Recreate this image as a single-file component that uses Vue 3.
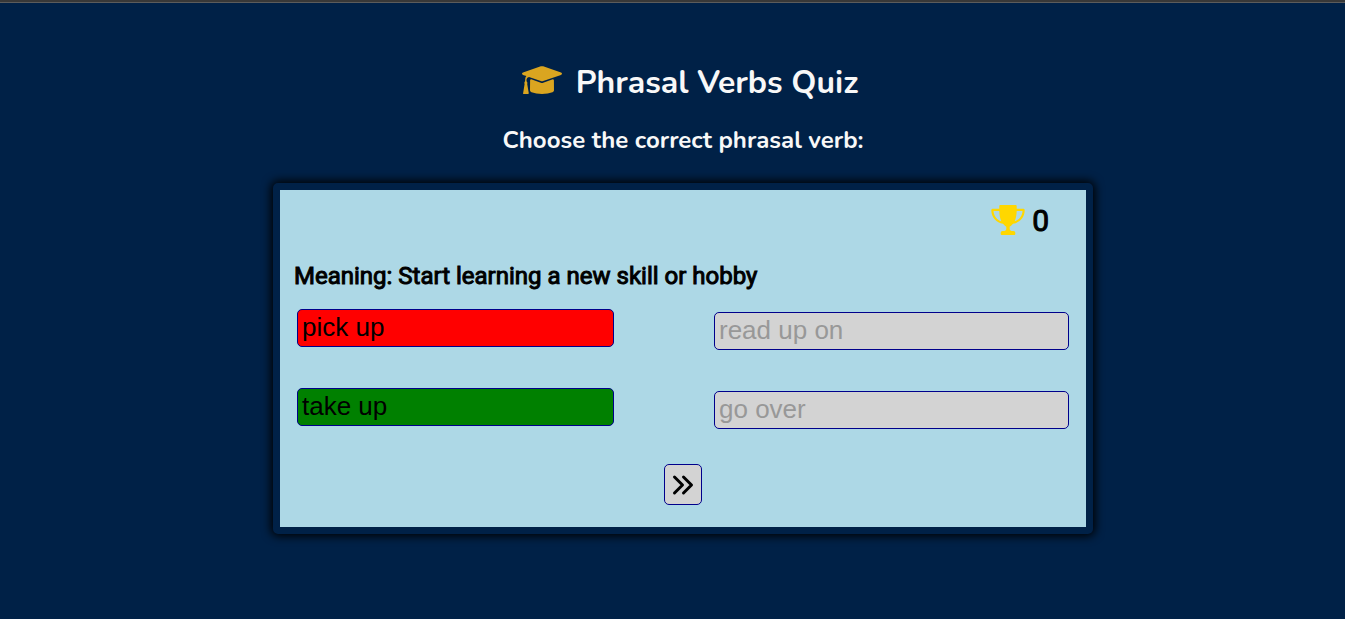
<script setup>
import { ref } from 'vue'

const score = ref(0)
const meaning = 'Start learning a new skill or hobby'
const columns = [
  {
    side: 'first',
    options: [
      { text: 'pick up', state: 'wrong' },
      { text: 'take up', state: 'right' },
    ],
  },
  {
    side: 'second',
    options: [
      { text: 'read up on', state: 'idle' },
      { text: 'go over', state: 'idle' },
    ],
  },
]
</script>

<template>
  <main class="page">
    <header class="header">
      <h1 class="title">
        <svg class="cap" viewBox="0 0 40 28" aria-hidden="true">
          <path d="M18.8.3Q20 0 21.2.3L39 6.5Q41 7.700 39 8.900L21.200 15.100Q20 15.500 18.800 15.100L7 11Q4.900 11.200 4.600 13.200L4.500 15.200Q5.800 16.400 5.200 18L6.800 27.300Q6.700 28 6 28H1.700Q1 28 1.100 27.300L2.600 18Q1.900 16.400 3.100 15.200L3.200 13Q3.300 11.200 4.400 10.100L1 8.900Q-1 7.700 1 6.500Z" />
          <path d="M9.200 13.200L18.800 16.700Q20 17.100 21.200 16.700L30.800 13.200Q31.800 13.200 31.900 14.300L32 24.500Q31.800 25.600 30.500 26.200Q26 28 20 28Q14 28 9.500 26.200Q8.200 25.600 8 24.500L8.100 14.300Q8.200 13.200 9.200 13.200Z" />
        </svg>
        <span>Phrasal Verbs Quiz</span>
      </h1>
      <h2 class="subtitle">Choose the correct phrasal verb:</h2>
    </header>

    <section class="card">
      <div class="score">
        <svg class="trophy" viewBox="0 0 34 30" aria-hidden="true">
          <path d="M9.300 0H24.700Q25.700 0 25.700 1V3.800H32.300Q33.700 3.800 33.700 5.200C33.700 12.500 28.500 17.500 22 18.800Q19.800 21.300 18.700 21.700V24.300Q18.800 25.700 20.500 25.900H22.500Q24.300 26 24.300 27.700V29Q24.300 30 23.300 30H10.700Q9.700 30 9.700 29V27.700Q9.700 26 11.500 25.900H13.500Q15.200 25.700 15.300 24.300V21.700Q14.200 21.300 12 18.800C5.500 17.500.3 12.500.3 5.200Q.3 3.800 1.700 3.800H8.300V1Q8.300 0 9.300 0ZM8.300 5.900H2.500C2.800 11 6 14.700 10.300 16.300C9 13.500 8.400 9.500 8.300 5.900ZM25.700 5.900C25.600 9.500 25 13.500 23.700 16.300C28 14.700 31.200 11 31.500 5.900Z" />
        </svg>
        <span>{{ score }}</span>
      </div>

      <p class="question">Meaning: {{ meaning }}</p>

      <div class="options">
        <div v-for="column in columns" :key="column.side" class="column" :class="column.side">
          <button
            v-for="option in column.options"
            :key="option.text"
            type="button"
            class="option"
            :class="option.state"
            :disabled="option.state === 'idle'"
          >
            {{ option.text }}
          </button>
        </div>
      </div>

      <button type="button" class="next" aria-label="Next question">
        <svg viewBox="0 0 24 24" aria-hidden="true">
          <path d="M3.500 4L11.500 12L3.500 20M12.500 4L20.500 12L12.500 20" />
        </svg>
      </button>
    </section>
  </main>
</template>

<style>
body {
  background: #002147;
}
</style>

<style scoped>
.page {
  box-sizing: border-box;
  min-height: 100vh;
  display: flex;
  flex-direction: column;
  align-items: center;
  padding: 60px 0 40px 21px;
  border-top: 2px solid #383838;
  box-shadow: inset 0 1px #5c5c5c;
  background: #002147;
}

.header {
  display: flex;
  flex-direction: column;
  align-items: center;
  gap: 19px;
  color: #f8f8f8;
  font-family: Nunito, Lato, sans-serif;
  text-align: center;
}

.title {
  display: flex;
  align-items: flex-start;
  gap: 14px;
  margin: 0;
  padding-left: 14px;
  font-size: 32px;
  line-height: 42px;
  font-weight: 700;
}

.cap {
  width: 40px;
  height: 28px;
  margin-top: 4px;
  fill: #daa520;
}

.subtitle {
  margin: 0;
  font-size: 24px;
  line-height: 34px;
  font-weight: 700;
}

.card {
  box-sizing: border-box;
  width: 62%;
  min-width: 600px;
  max-width: 820px;
  display: flex;
  flex-direction: column;
  margin-top: 26px;
  padding: 12px 14px 22px;
  border: 7px solid #002147;
  border-radius: 5px;
  background: #add8e6;
  box-shadow: 0 0 10px 2px #000;
  color: #000;
}

.score {
  display: flex;
  justify-content: flex-end;
  align-items: flex-start;
  gap: 7px;
  padding-right: 23px;
  font: 400 30px/38px Roboto, sans-serif;
  -webkit-text-stroke: 1px #000;
}

.trophy {
  width: 34px;
  height: 30px;
  margin-top: 3px;
  fill: #ffd700;
}

.question {
  margin: 20px 0 17px;
  font: 400 24px/32px Roboto, sans-serif;
  -webkit-text-stroke: 1px #000;
}

.options {
  display: flex;
  gap: 100px;
  padding: 0 3px;
}

.column {
  display: flex;
  flex-direction: column;
  gap: 41px;
}

.first {
  flex: 317;
}

.second {
  flex: 355;
  padding-top: 3px;
}

.option {
  height: 38px;
  padding: 0 4px 2px;
  border: 1px solid #00008b;
  border-radius: 5px;
  font: 26px/30px "Liberation Sans", Arial, sans-serif;
  text-align: left;
  color: #000;
}

.wrong {
  background: #f00;
}

.right {
  background: #008000;
}

.idle {
  background: #d3d3d3;
  color: #989898;
}

.next {
  align-self: center;
  display: flex;
  align-items: center;
  justify-content: center;
  width: 38px;
  height: 41px;
  margin-top: 35px;
  padding: 0;
  border: 1px solid #00008b;
  border-radius: 5px;
  background: #d3d3d3;
}

.next svg {
  width: 24px;
  height: 24px;
  fill: none;
  stroke: #000;
  stroke-width: 3;
  stroke-linecap: round;
  stroke-linejoin: round;
}
</style>
